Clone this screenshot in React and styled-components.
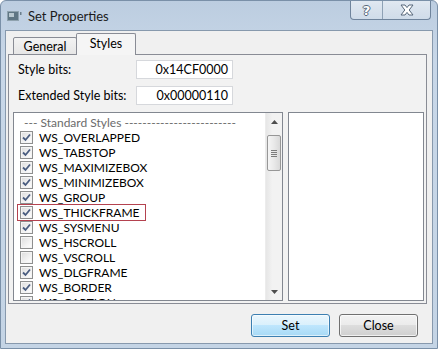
import React from 'react';
import styled, { createGlobalStyle } from 'styled-components';

const GlobalStyle = createGlobalStyle`
  html, body { margin:0; padding:0; background:#fff; }
  body { font-family: Lato, "Noto Sans", sans-serif; font-size:12.5px; color:#000; }
  * { box-sizing:border-box; }
`

const Window = styled.div`
  width:438px;
  height:349px;
  display:flex;
  flex-direction:column;
  background:linear-gradient(#bccde0, #c8d7e8 60px, #c4d4e5);
  border:1px solid #7a90a8;
  border-radius:6px 6px 0 0;
  overflow:hidden;
`

const TitleBar = styled.div`
  height:29px;
  display:flex;
  align-items:center;
  padding-left:6px;
`

const AppIcon = styled.svg`
  width:15px;
  height:10px;
  margin-right:6px;
  flex-shrink:0;
`

const Title = styled.span`
  font-size:13px;
  color:#1b1b1b;
`

const Caption = styled.div`
  margin-left:auto;
  margin-right:6px;
  align-self:flex-start;
  display:flex;
  height:19px;
  border:1px solid #6f849c;
  border-top:none;
  border-radius:0 0 4px 4px;
  background:linear-gradient(rgba(255,255,255,0.55), rgba(255,255,255,0.25));
  overflow:hidden;
`

const CapButton = styled.div`
  width:${p => p.$w}px;
  display:flex;
  align-items:center;
  justify-content:center;
  border-left:${p => p.$first ? 'none' : '1px solid #8ea1b5'};
`

const HelpGlyph = styled.span`
  font-family:"DejaVu Sans", sans-serif;
  font-weight:bold;
  font-size:13px;
  color:#fff;
  text-shadow:1px 0 0 #56677a, -1px 0 0 #56677a, 0 1px 0 #56677a, 0 -1px 0 #56677a;
  line-height:1;
`

const Client = styled.div`
  flex:1;
  margin:0 4px 4px 4px;
  background:#f0f0f0;
  border:1px solid #8799ad;
  padding:2px 5px 6px 2px;
  display:flex;
  flex-direction:column;
`

const TabStrip = styled.div`
  height:22px;
  display:flex;
  align-items:flex-end;
  padding-left:5px;
`

const Tab = styled.div`
  position:relative;
  height:${p => p.$active ? 22 : 18}px;
  width:${p => p.$w}px;
  margin-left:${p => p.$active ? -1 : 0}px;
  z-index:${p => p.$active ? 1 : 0};
  display:flex;
  align-items:center;
  justify-content:center;
  padding-bottom:${p => p.$active ? 2 : 0}px;
  border:1px solid #898c95;
  border-bottom:${p => p.$active ? 'none' : '1px solid #898c95'};
  border-radius:2px 2px 0 0;
  background:${p => p.$active ? '#f5f5f5' : 'linear-gradient(#f3f3f3, #e6e6e6)'};
  color:#000;
`

const TabPage = styled.div`
  margin-top:-1px;
  border:1px solid #898c95;
  background:#f2f2f2;
  padding:5px 2px 2px 4px;
  display:flex;
  flex-direction:column;
`

const FieldGrid = styled.div`
  display:grid;
  grid-template-columns:123px 97px;
  grid-auto-rows:19px;
  row-gap:7px;
  align-items:center;
`

const Label = styled.span`
  padding-left:5px;
`

const ValueBox = styled.div`
  height:19px;
  background:#fff;
  border:1px solid #d6d8dc;
  text-align:right;
  padding-right:4px;
  line-height:17px;
`

const ListsRow = styled.div`
  margin-top:7px;
  height:189px;
  display:flex;
  gap:5px;
`

const ListBox = styled.div`
  width:${p => p.$w ? p.$w + 'px' : 'auto'};
  flex:${p => p.$w ? 'none' : 1};
  background:#fff;
  border:1px solid #828790;
  display:flex;
  overflow:hidden;
`

const Items = styled.div`
  flex:1;
  padding-top:2px;
  overflow:hidden;
  font-size:12px;
`

const Header = styled.div`
  height:15px;
  line-height:15px;
  padding-left:10px;
  color:#6b6b6b;
  white-space:nowrap;
  overflow:hidden;
`

const Item = styled.div`
  display:flex;
  align-items:center;
  width:fit-content;
  height:15px;
  line-height:15px;
  margin-left:4px;
  padding:0 6px 0 2px;
  outline:${p => p.$marked ? '1px solid #b4424f' : 'none'};
  white-space:nowrap;
`

const Box = styled.span`
  width:13px;
  height:13px;
  margin-right:6px;
  flex-shrink:0;
  border:1px solid #8e8f8f;
  background:linear-gradient(135deg, #dcdcdc, #f6f6f6 70%, #fff);
  box-shadow:inset 0 0 0 1px #f4f4f4;
  display:flex;
  align-items:center;
  justify-content:center;
`

const ScrollBar = styled.div`
  width:17px;
  display:flex;
  flex-direction:column;
  background:linear-gradient(to right, #e6e6e6, #f2f2f2 40%, #f2f2f2);
  border-left:1px solid #ececec;
`

const Arrow = styled.div`
  height:17px;
  display:flex;
  align-items:center;
  justify-content:center;
`

const Track = styled.div`
  flex:1;
  padding:5px 1px 0 1px;
`

const Thumb = styled.div`
  height:36px;
  border:1px solid #979797;
  border-radius:2px;
  background:linear-gradient(to right, #f5f5f5, #e9e9e9 50%, #d9d9d9);
  display:flex;
  flex-direction:column;
  align-items:center;
  justify-content:center;
  gap:1px;
`

const Grip = styled.span`
  width:6px;
  height:1px;
  background:#7d7d7d;
`

const ButtonRow = styled.div`
  margin-top:10px;
  display:flex;
  justify-content:flex-end;
  gap:9px;
  padding-right:9px;
`

const Button = styled.div`
  width:79px;
  height:23px;
  border-radius:3px;
  display:flex;
  align-items:center;
  justify-content:center;
  border:1px solid ${p => p.$default ? '#3c7fb1' : '#707070'};
  background:${p => p.$default
    ? 'linear-gradient(#eaf6fd, #d9f0fc 50%, #bee6fd 50%, #a7d9f5)'
    : 'linear-gradient(#f2f2f2, #ebebeb 50%, #dddddd 50%, #cfcfcf)'};
  box-shadow:inset 0 0 0 1px ${p => p.$default ? 'rgba(255,255,255,0.6)' : 'rgba(255,255,255,0.7)'};
`

const styles = [
  ['WS_OVERLAPPED', true],
  ['WS_TABSTOP', true],
  ['WS_MAXIMIZEBOX', true],
  ['WS_MINIMIZEBOX', true],
  ['WS_GROUP', true],
  ['WS_THICKFRAME', true, true],
  ['WS_SYSMENU', true],
  ['WS_HSCROLL', false],
  ['WS_VSCROLL', false],
  ['WS_DLGFRAME', true],
  ['WS_BORDER', true],
  ['WS_CAPTION', true],
]

const Check = () => (
  <svg width="9" height="9" viewBox="0 0 9 9">
    <path d="M1 4.5 L3.5 7 L8 1.5" fill="none" stroke="#4a5d80" strokeWidth="1.8" />
  </svg>
)

const App = () => {
  return (
    <>
      <GlobalStyle />
      <Window>
        <TitleBar>
          <AppIcon viewBox="0 0 15 10">
            <rect x="0.5" y="0.5" width="11" height="9" fill="#5f7684" stroke="#8fa2ae" />
            <rect x="2" y="2" width="5" height="4" fill="#b9c8d0" />
            <rect x="13" y="1" width="1.5" height="3" fill="#6b7f8c" />
          </AppIcon>
          <Title>Set Properties</Title>
          <Caption>
            <CapButton $w={31} $first><HelpGlyph>?</HelpGlyph></CapButton>
            <CapButton $w={48}>
              <svg width="14" height="12" viewBox="0 0 14 12">
                <path d="M1 1 H5 L7 3.6 L9 1 H13 L9.2 6 L13 11 H9 L7 8.4 L5 11 H1 L4.8 6 Z" fill="#fff" stroke="#56677a" strokeWidth="1" />
              </svg>
            </CapButton>
          </Caption>
        </TitleBar>
        <Client>
          <TabStrip>
            <Tab $w={64}>General</Tab>
            <Tab $w={60} $active>Styles</Tab>
          </TabStrip>
          <TabPage>
            <FieldGrid>
              <Label>Style bits:</Label>
              <ValueBox>0x14CF0000</ValueBox>
              <Label>Extended Style bits:</Label>
              <ValueBox>0x00000110</ValueBox>
            </FieldGrid>
            <ListsRow>
              <ListBox $w={270}>
                <Items>
                  <Header>--- Standard Styles -------------------------</Header>
                  {styles.map(([name, on, marked]) => (
                    <Item key={name} $marked={marked}>
                      <Box>{on && <Check />}</Box>
                      {name}
                    </Item>
                  ))}
                </Items>
                <ScrollBar>
                  <Arrow>
                    <svg width="7" height="4" viewBox="0 0 7 4"><path d="M0 4 L3.5 0 L7 4 Z" fill="#4d4d4d" /></svg>
                  </Arrow>
                  <Track>
                    <Thumb><Grip /><Grip /><Grip /><Grip /></Thumb>
                  </Track>
                  <Arrow>
                    <svg width="7" height="4" viewBox="0 0 7 4"><path d="M0 0 L7 0 L3.5 4 Z" fill="#4d4d4d" /></svg>
                  </Arrow>
                </ScrollBar>
              </ListBox>
              <ListBox />
            </ListsRow>
          </TabPage>
          <ButtonRow>
            <Button $default>Set</Button>
            <Button>Close</Button>
          </ButtonRow>
        </Client>
      </Window>
    </>
  );
}

export default App;
